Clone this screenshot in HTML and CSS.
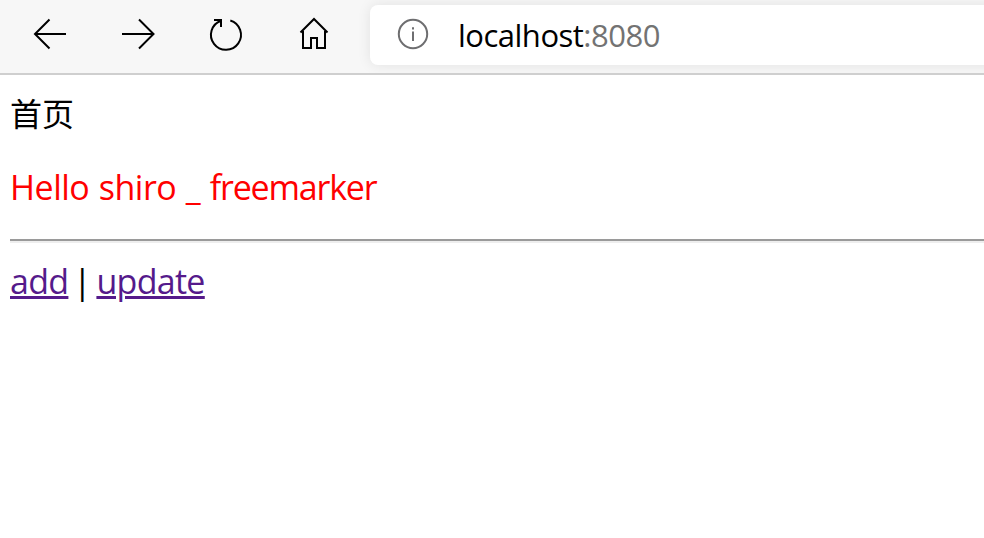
FILE: index.html
```html
<!DOCTYPE html>
<html lang="zh">
<head>
<meta charset="utf-8">
<title>首页</title>
<link rel="stylesheet" href="styles.css">
</head>
<body>
<header class="toolbar">
  <nav class="buttons">
    <svg class="icon" viewBox="0 0 40 40"><path d="M36 20H5.500M19.500 5.500L5 20L19.500 34.500"/></svg>
    <svg class="icon" viewBox="0 0 40 40"><path d="M4 20H35M21 5.500L35.500 20L21 34.500"/></svg>
    <svg class="icon" viewBox="0 0 40 40"><path d="M24.300 6.500A15 15 0 1 1 15 6.700M8 6H15V13"/></svg>
    <svg class="icon" viewBox="0 0 40 40"><path d="M6.500 18.500L20 5L33.500 18.500M9 17V34H17V24H23V34H31V17"/></svg>
  </nav>
  <div class="address">
    <svg class="info" viewBox="0 0 32 32"><circle cx="16" cy="16" r="14.200"/><path d="M16 13.500V23M16 9.200V11.500"/></svg>
    <span class="url">localhost<span class="port">:8080</span></span>
  </div>
</header>
<main class="page">
  <div class="title">首页</div>
  <p class="greeting">Hello shiro _ <span class="name">freemarker</span></p>
  <div class="rule"></div>
  <div class="links"><a class="add" href="#">add</a><span class="bar">|</span><a class="update" href="#">update</a></div>
</main>
</body>
</html>
```
FILE: styles.css
```css
body {
  margin: 0;
  height: 538px;
  overflow: hidden;
  background: #fff;
  color: #000;
  font-family: "Open Sans", "Noto Sans", "Noto Sans CJK SC", sans-serif;
}
.toolbar {
  box-sizing: border-box;
  height: 75px;
  display: flex;
  background: #f7f7f7;
  border-bottom: 2px solid #cfcfcf;
  overflow: hidden;
}
.buttons {
  display: flex;
  gap: 48px;
  width: 340px;
  flex: none;
  padding: 14px 0 0 30px;
}
.icon {
  width: 40px;
  height: 40px;
  flex: none;
  fill: none;
  stroke: #000;
  stroke-width: 2;
}
.address {
  display: flex;
  flex: 1;
  height: 60px;
  margin: 5px -20px 0 0;
  border-radius: 8px;
  background: #fff;
  box-shadow: 0 0 14px rgba(0, 0, 0, 0.09);
}
.info {
  width: 32px;
  height: 32px;
  margin: 13px 0 0 27px;
  fill: none;
  stroke: #6e6e70;
  stroke-width: 2;
}
.url {
  margin-left: 29px;
  font-size: 31px;
  line-height: 60px;
  letter-spacing: -0.5px;
  white-space: nowrap;
}
.port {
  color: #737373;
}
.page {
  padding: 13px 0 0 10px;
}
.title {
  font-family: "Noto Sans CJK SC", sans-serif;
  font-size: 32px;
  line-height: 48px;
}
.greeting {
  margin: 27px 0 28px;
  font-size: 34px;
  line-height: 48px;
  letter-spacing: -0.5px;
  word-spacing: 1.2px;
  color: #f00;
  white-space: nowrap;
}
.name {
  letter-spacing: -1.2px;
}
.rule {
  height: 2px;
  border-top: 2px solid #9a9a9a;
  background: #eee;
}
.links {
  display: flex;
  margin-top: 14px;
  font-size: 34px;
  line-height: 48px;
}
.links a {
  color: #551a8b;
  letter-spacing: -0.7px;
  text-decoration-thickness: 3px;
}
.bar {
  width: 28px;
  text-align: center;
}
```
